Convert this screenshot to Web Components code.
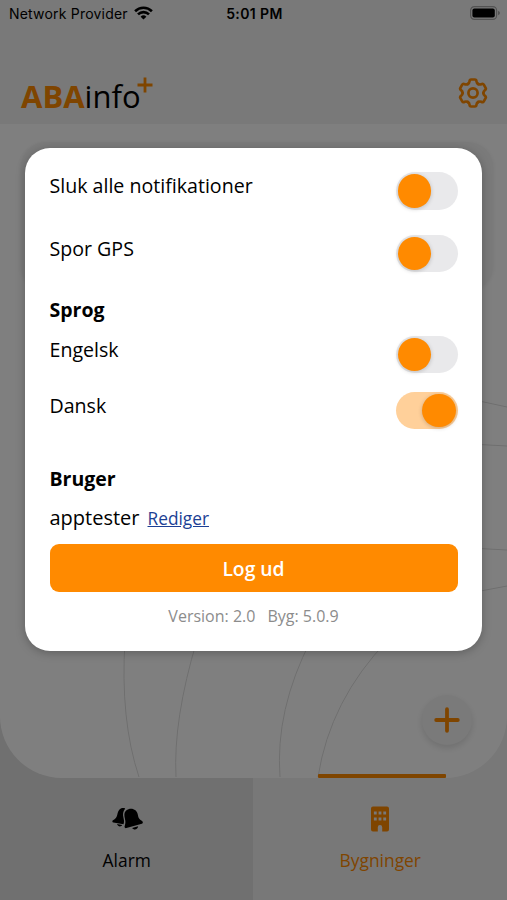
<!DOCTYPE html>
<html lang="da">
<head>
<meta charset="utf-8">
<meta name="viewport" content="width=device-width, initial-scale=1">
<title>ABAinfo+</title>
<style>
    body {
        margin: 0;
        font-family: "Open Sans", "Noto Sans", sans-serif;
        color: #000;
        --orange: #ff8a00;
    }
</style>
</head>
<body>

<aba-app>
    <status-bar slot="status" provider="Network Provider" time="5:01 PM"></status-bar>
    <app-header slot="header"></app-header>
    <building-list slot="main"></building-list>
    <tab-item slot="tabs" label="Alarm" icon="bells"></tab-item>
    <tab-item slot="tabs" label="Bygninger" icon="building" active></tab-item>

    <settings-dialog slot="dialog">
        <setting-row label="Sluk alle notifikationer"></setting-row>
        <setting-row label="Spor GPS" style="margin-top: 25px"></setting-row>
        <h3 slot="language">Sprog</h3>
        <setting-row slot="language" label="Engelsk"></setting-row>
        <setting-row slot="language" label="Dansk" style="margin-top: 18.5px" on></setting-row>
        <user-panel slot="user" name="apptester" version="2.0" build="5.0.9"></user-panel>
    </settings-dialog>
</aba-app>

<script>
class AbaApp extends HTMLElement {

    constructor() {
        super()
        this.attachShadow({mode: "open"})
    }

    connectedCallback() {
        this.shadowRoot.innerHTML = `
        <style>
            :host {
                display: flex;
                flex-direction: column;
                position: relative;
                height: 900px;
                overflow: hidden;
                background: linear-gradient(90deg, #e1e1e1 50%, #f1f1f1 50%);
            }
            .top {
                height: 124px;
                background: #f2f2f2;
            }
            nav {
                display: flex;
                flex: 1;
            }
            .overlay {
                position: absolute;
                inset: 0;
                display: flex;
                justify-content: center;
                align-items: flex-start;
                padding-top: 148px;
                background: rgba(0, 0, 0, 0.5);
            }
        </style>
        <div class="top">
            <slot name="status"></slot>
            <slot name="header"></slot>
        </div>
        <slot name="main"></slot>
        <nav><slot name="tabs"></slot></nav>
        <div class="overlay"><slot name="dialog"></slot></div>
        `
    }
}

class StatusBar extends HTMLElement {

    constructor() {
        super()
        this.attachShadow({mode: "open"})
    }

    connectedCallback() {
        this.shadowRoot.innerHTML = `
        <style>
            :host {
                display: grid;
                grid-template-columns: 1fr auto 1fr;
                align-items: center;
                height: 26px;
                padding: 0 7px 2px 9px;
                font: 500 14px "Inter", sans-serif;
            }
            .left {
                display: flex;
                align-items: center;
                gap: 6px;
                font-weight: 400;
                letter-spacing: 0.2px;
            }
            .left span, .time {
                padding-top: 1px;
            }
            .time {
                font-weight: 600;
                letter-spacing: 0.4px;
            }
            .battery {
                justify-self: end;
            }
            svg {
                display: block;
            }
        </style>
        <div class="left">
            <span>${this.getAttribute("provider")}</span>
            <svg width="19" height="14" viewBox="0 0 19 14" fill="none" stroke="#000" stroke-width="2.6">
                <path d="M1.1 5.2a12 12 0 0 1 16.8 0"/>
                <path d="M4 8.4a7.8 7.8 0 0 1 11 0"/>
                <path d="M9.5 13.6L6.6 10.8a4.1 4.1 0 0 1 5.8 0z" fill="#000" stroke="none"/>
            </svg>
        </div>
        <span class="time">${this.getAttribute("time")}</span>
        <svg class="battery" width="30" height="14" viewBox="0 0 30 14">
            <rect x=".6" y=".6" width="26" height="12.8" rx="3.8" fill="none" stroke="#a6a6a6" stroke-width="1.2"/>
            <rect x="2.4" y="2.4" width="22.4" height="9.2" rx="2" fill="#000"/>
            <path d="M28 4.8q2 .8 2 2.2t-2 2.2z" fill="#a6a6a6"/>
        </svg>
        `
    }
}

class AppHeader extends HTMLElement {

    constructor() {
        super()
        this.attachShadow({mode: "open"})
    }

    // the gear is one tooth repeated every 60 degrees
    gearTeeth() {
        let teeth = "";
        for(let i = 0; i < 6; i++){
            teeth += `<path transform="rotate(${i * 60} 15 15)" d="M9.8 6C11.1 5.25 11.4 4.6 11.5 3.5C11.6 2.1 12.1 1.5 13.2 1.5H16.8C17.9 1.5 18.4 2.1 18.5 3.5C18.6 4.6 18.9 5.25 20.2 6"/>`;
        }
        return teeth;
    }

    connectedCallback() {
        this.shadowRoot.innerHTML = `
        <style>
            :host {
                display: flex;
                justify-content: space-between;
                align-items: center;
                padding: 46px 19px 0 21px;
            }
            .logo {
                display: flex;
                font-size: 31px;
                line-height: 40px;
            }
            .logo b, .logo span {
                padding-top: 2px;
            }
            b {
                color: var(--orange);
            }
            svg {
                display: block;
            }
            .plus {
                margin: 3px 0 0 -4px;
            }
            .gear {
                margin-top: -4px;
            }
        </style>
        <div class="logo">
            <b>ABA</b><span>info</span>
            <svg class="plus" width="16" height="16" viewBox="0 0 16 16" stroke="#ff8a00" stroke-width="2.8">
                <path d="M8 .5v15M.5 8h15"/>
            </svg>
        </div>
        <svg class="gear" width="30" height="30" viewBox="0 0 30 30" fill="none" stroke="#ff8a00" stroke-width="2.7" stroke-linecap="round">
            <circle cx="15" cy="15" r="4.6"/>
            ${this.gearTeeth()}
        </svg>
        `
    }
}

class BuildingList extends HTMLElement {

    constructor() {
        super()
        this.attachShadow({mode: "open"})
    }

    connectedCallback() {
        this.shadowRoot.innerHTML = `
        <style>
            :host {
                display: block;
                position: relative;
                height: 654px;
                overflow: hidden;
                background: #fff;
                border-radius: 0 0 62px 62px;
            }
            .card {
                height: 148px;
                margin: 18px 14px 0 21px;
                border-radius: 25px;
                background: #f4f4f4;
                box-shadow: 0 1px 5px rgba(0, 0, 0, 0.08);
            }
            .lines {
                position: absolute;
                inset: 0;
            }
            /* floating add button */
            .add {
                position: absolute;
                right: 35px;
                bottom: 33px;
                display: grid;
                place-items: center;
                width: 50px;
                height: 50px;
                border-radius: 50%;
                background: #f4f4f4;
                box-shadow: 0 3px 7px rgba(0, 0, 0, 0.13);
            }
        </style>
        <svg class="lines" width="507" height="654" viewBox="0 124 507 654" fill="none" stroke="#dedede">
            <path d="M125 640Q120 720 139 777"/>
            <path d="M197 640Q173 720 176 777"/>
            <path d="M311 640Q275 710 280 777"/>
            <path d="M388 640Q330 700 318 777"/>
            <path d="M470 399L507 407M470 444L507 446M470 548L507 550M470 593L507 586"/>
        </svg>
        <div class="card"></div>
        <div class="add">
            <svg width="26" height="26" viewBox="0 0 26 26" stroke="#ff8a00" stroke-width="3.8" stroke-linecap="round">
                <path d="M13 2.2v21.6M2.2 13h21.6"/>
            </svg>
        </div>
        `
    }
}

const tabIcons = {
    bells: `
        <svg width="32" height="26" viewBox="0 0 32 26">
            <path d="M14.2 2.4C9.8 .9 7.2 4 6.4 8.2 5.9 11.5 4.3 12.7 2 14.2c-1 .7-.9 2 .4 2.3l10.1 1.7c.9-2.8.5-4.4 0-6.3-.9-3.7-.6-6.6 1.700-9.500z"/>
            <path d="M6 18.1l5.2 1c-1.200 2.300-4.400 1.800-5.200-1z"/>
            <path d="M15.2 4.500C19.400 1.200 26 2.800 26.900 9c.4 3.300 1.900 4.600 4.200 6.100 1.100.8 1 2.100-.2 2.600L15.400 22.100c-1.400.3-2.100-.7-1.700-2 .9-2.800.9-4.800.2-7.700-.8-3.200-.9-5.800 1.300-7.900z"/>
            <path d="M21.200 22l5.900-1.700c-.1 3.300-4.300 4.300-5.900 1.700z"/>
        </svg>`,
    building: `
        <svg width="20" height="26" viewBox="0 0 20 26">
            <path fill="#ff8a00" fill-rule="evenodd" d="M3 .5h14a2 2 0 0 1 2 2v21a2 2 0 0 1-2 2h-4.800v-4.300a2.200 2.200 0 0 0-4.400 0v4.300H3a2 2 0 0 1-2-2v-21a2 2 0 0 1 2-2zM3.900 5.500v3h2.800v-3zM8.600 5.500v3h2.800v-3zM13.300 5.500v3h2.800v-3zM3.900 11.500v3h2.800v-3zM8.600 11.500v3h2.800v-3zM13.300 11.500v3h2.800v-3z"/>
        </svg>`
}

class TabItem extends HTMLElement {

    constructor() {
        super()
        this.attachShadow({mode: "open"})
    }

    connectedCallback() {
        this.shadowRoot.innerHTML = `
        <style>
            :host {
                display: flex;
                flex-direction: column;
                align-items: center;
                flex: 1;
                position: relative;
                padding-top: 28px;
                font-size: 17.4px;
            }
            :host([active]) {
                color: var(--orange);
            }
            :host([active])::before {
                content: "";
                position: absolute;
                top: -4px;
                left: 64.5px;
                width: 128px;
                height: 4px;
                border-radius: 1px;
                background: var(--orange);
            }
            svg {
                display: block;
            }
            span {
                margin-top: 16px;
                line-height: 24px;
            }
        </style>
        ${tabIcons[this.getAttribute("icon")]}
        <span>${this.getAttribute("label")}</span>
        `
    }
}

class SettingsDialog extends HTMLElement {

    constructor() {
        super()
        this.attachShadow({mode: "open"})
    }

    connectedCallback() {
        this.shadowRoot.innerHTML = `
        <style>
            :host {
                display: block;
                box-sizing: border-box;
                width: 457px;
                height: 503px;
                padding: 24px 24.5px 0;
                border-radius: 25px;
                background: #fff;
                box-shadow: 0 2px 10px rgba(0, 0, 0, 0.25);
            }
            .language {
                margin-top: 25px;
            }
            ::slotted(h3) {
                margin: 0 0 12.5px;
                font-size: 19.5px;
                line-height: 26px;
            }
            .user {
                margin-top: 36.5px;
            }
        </style>
        <slot></slot>
        <div class="language"><slot name="language"></slot></div>
        <div class="user"><slot name="user"></slot></div>
        `
    }
}

class SettingRow extends HTMLElement {

    constructor() {
        super()
        this.attachShadow({mode: "open"})
    }

    connectedCallback() {
        this.render()
        this.addEventListeners()
    }

    addEventListeners() {
        this.shadowRoot
        .querySelector(".switch")
        .addEventListener("click", () => this.toggleAttribute("on"));
    }

    render() {
        this.shadowRoot.innerHTML = `
        <style>
            :host {
                display: flex;
                justify-content: space-between;
                align-items: flex-start;
                height: 37.5px;
                font-size: 19.6px;
                line-height: 27px;
            }
            .switch {
                display: flex;
                box-sizing: border-box;
                width: 62px;
                height: 37.5px;
                padding: 2px;
                border-radius: 19px;
                background: #e9e9eb;
                cursor: pointer;
            }
            .knob {
                width: 33.5px;
                height: 33.5px;
                border-radius: 50%;
                background: var(--orange);
                box-shadow: 0 1px 4px rgba(0, 0, 0, 0.2);
            }
            :host([on]) .switch {
                justify-content: flex-end;
                background: #ffd09a;
            }
        </style>
        <span>${this.getAttribute("label")}</span>
        <div class="switch"><div class="knob"></div></div>
        `
    }
}

class UserPanel extends HTMLElement {

    constructor() {
        super()
        this.attachShadow({mode: "open"})
    }

    connectedCallback() {
        this.shadowRoot.innerHTML = `
        <style>
            :host {
                display: block;
            }
            h3 {
                margin: 0;
                font-size: 19.5px;
                line-height: 26px;
            }
            .name {
                display: flex;
                align-items: baseline;
                gap: 8px;
                margin-top: 13px;
                font-size: 20px;
                line-height: 26px;
            }
            a {
                color: #1c3f94;
                font-size: 17.3px;
                text-decoration: underline;
            }
            button {
                display: block;
                width: 100%;
                height: 48.5px;
                margin-top: 12px;
                padding: 1px 0 0;
                border: none;
                border-radius: 9px;
                background: var(--orange);
                color: #fff;
                font: 600 19.3px "Open Sans", sans-serif;
            }
            .version {
                display: flex;
                justify-content: center;
                gap: 12px;
                margin-top: 13px;
                color: #8c8c8c;
                font-size: 16px;
                line-height: 22px;
            }
        </style>
        <h3>Bruger</h3>
        <div class="name">
            <span>${this.getAttribute("name")}</span>
            <a href="#">Rediger</a>
        </div>
        <button>Log ud</button>
        <div class="version">
            <span>Version: ${this.getAttribute("version")}</span>
            <span>Byg: ${this.getAttribute("build")}</span>
        </div>
        `
    }
}

customElements.define('aba-app', AbaApp);
customElements.define('status-bar', StatusBar);
customElements.define('app-header', AppHeader);
customElements.define('building-list', BuildingList);
customElements.define('tab-item', TabItem);
customElements.define('settings-dialog', SettingsDialog);
customElements.define('setting-row', SettingRow);
customElements.define('user-panel', UserPanel);
</script>
</body>
</html>
